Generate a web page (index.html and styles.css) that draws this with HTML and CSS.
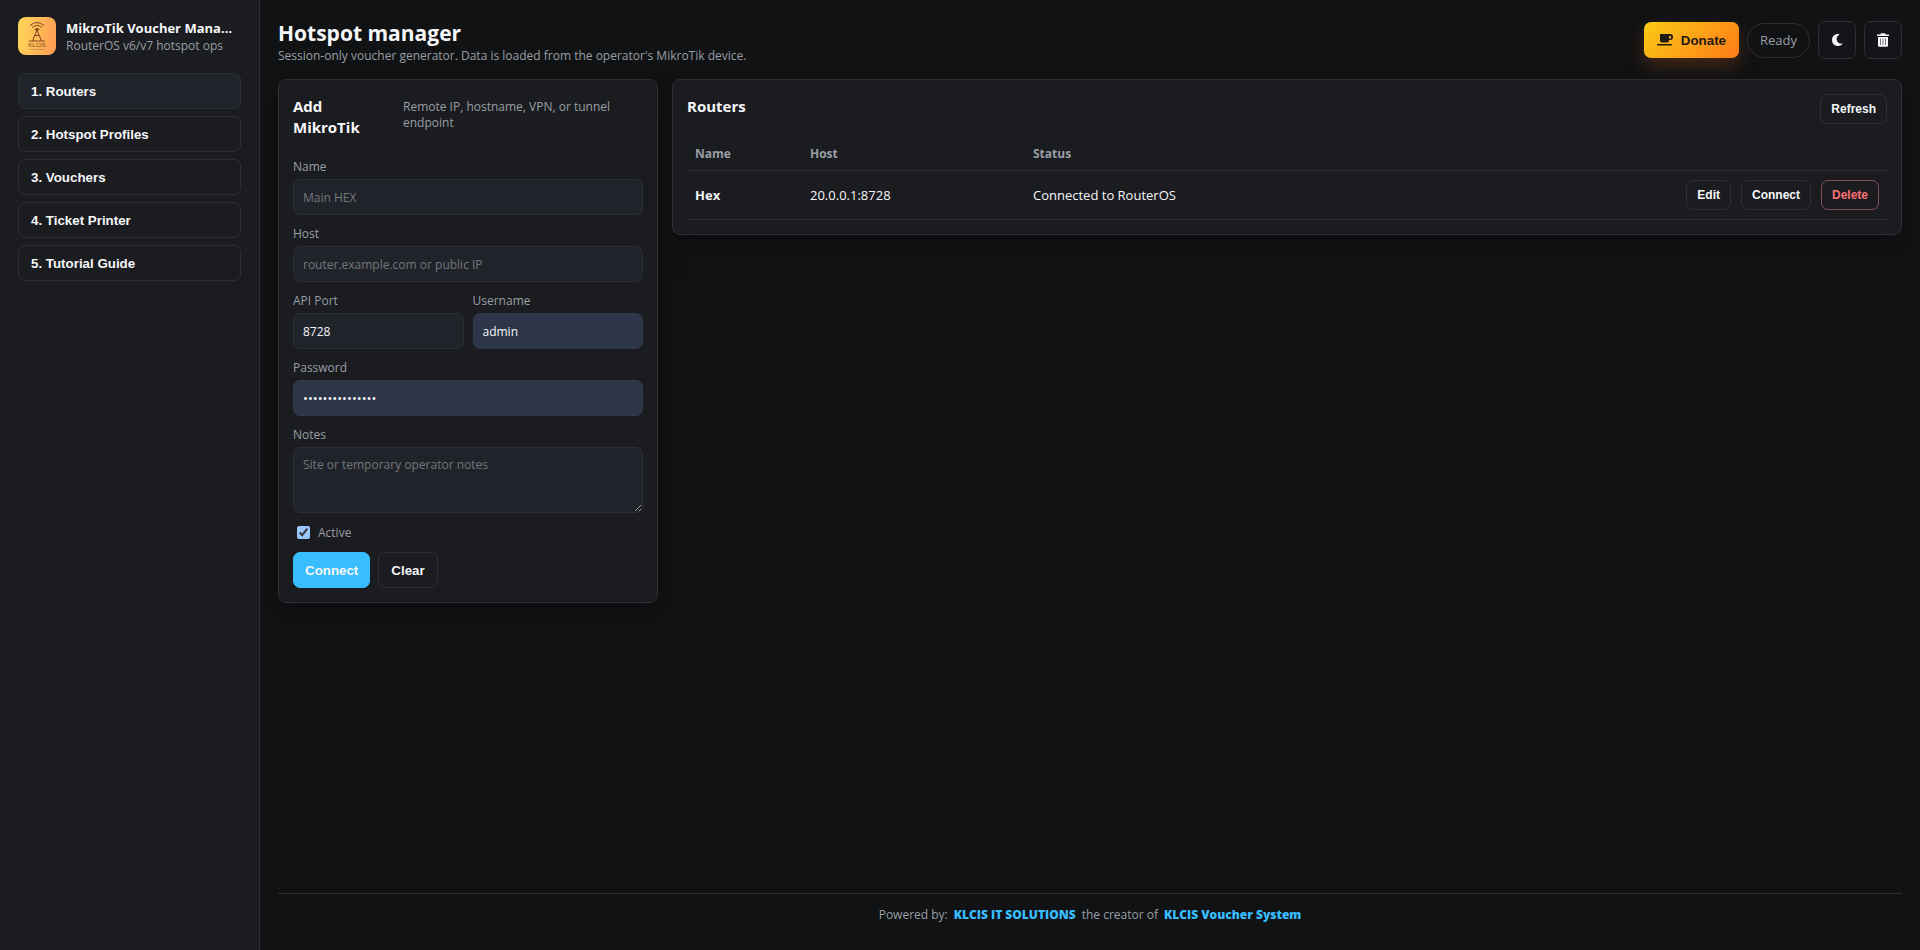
FILE: index.html
```html
<!DOCTYPE html>
<html lang="en">
<head>
  <meta charset="UTF-8">
  <meta name="viewport" content="width=device-width, initial-scale=1">
  <title>MikroTik Voucher Manager</title>
  <link rel="stylesheet" href="styles.css">
</head>
<body>
<div class="app">

  <aside class="sidebar">
    <div class="brand">
      <div class="brand-logo">
        <svg viewBox="0 0 38 38" fill="none" stroke="#7a4a1c" stroke-width="1">
          <path d="M12 8.500Q19 2.500 26 8.500M14 10.500Q19 6.500 24 10.500M16.500 12.500Q19 10.500 21.500 12.500"/>
          <path d="M19 13L14.500 24M19 13L23.500 24M17 18.500H21M11 24H27"/>
          <circle cx="19" cy="13" r="1" fill="#7a4a1c"/>
          <text class="logo-name" x="19" y="30" text-anchor="middle">KLCIS</text>
          <text class="logo-sub" x="19" y="33" text-anchor="middle">IT SOLUTIONS</text>
        </svg>
      </div>
      <div class="brand-text">
        <strong>MikroTik Voucher Manager</strong>
        <span>RouterOS v6/v7 hotspot ops</span>
      </div>
    </div>
    <nav class="nav">
      <button type="button" class="active">1. Routers</button>
      <button type="button">2. Hotspot Profiles</button>
      <button type="button">3. Vouchers</button>
      <button type="button">4. Ticket Printer</button>
      <button type="button">5. Tutorial Guide</button>
    </nav>
  </aside>

  <main class="main">
    <header class="topbar">
      <div>
        <h1>Hotspot manager</h1>
        <p>Session-only voucher generator. Data is loaded from the operator's MikroTik device.</p>
      </div>
      <div class="actions">
        <button type="button" class="donate">
          <svg width="16" height="14" viewBox="0 0 16 14" fill="currentColor">
            <path fill-rule="evenodd" d="M3 1H13a3 3 0 0 1 0 6H12v.5a2 2 0 0 1-2 2H5a2 2 0 0 1-2-2zM12 3V5.500H13a1.250 1.250 0 0 0 0-2.500z"/>
            <path d="M0 11H15c0 1-.7 1.500-1.500 1.500H1.500C.7 12.500 0 12 0 11z"/>
          </svg>
          Donate
        </button>
        <span class="status">Ready</span>
        <button type="button" class="icon-btn" aria-label="Toggle theme">
          <svg width="14" height="14" viewBox="0 0 14 14" fill="currentColor">
            <path d="M8 1C4.500 1 2 3.600 2 7s2.500 6 6 6c1.700 0 3.100-.6 4.200-1.700.3-.4 0-.8-.4-.7C8.800 11.100 6.600 8.900 6.600 6.100c0-1.800.9-3.300 2.400-4.200.4-.3.3-.8-.2-.9z"/>
          </svg>
        </button>
        <button type="button" class="icon-btn" aria-label="Clear session">
          <svg width="14" height="14" viewBox="0 0 14 14">
            <path fill="currentColor" d="M1 1.500H4.300L5 .3H9l.7 1.200H13V3H1zM2 4H12V12.500A1.300 1.300 0 0 1 10.700 13.800H3.300A1.300 1.300 0 0 1 2 12.500z"/>
            <path stroke="#55575c" stroke-width=".8" d="M4.500 5.500V12M7 5.500V12M9.500 5.500V12"/>
          </svg>
        </button>
      </div>
    </header>

    <div class="columns">
      <section class="panel">
        <div class="panel-head">
          <h2>Add MikroTik</h2>
          <span>Remote IP, hostname, VPN, or tunnel endpoint</span>
        </div>
        <form class="form">
          <label>Name
            <input type="text" name="name" placeholder="Main HEX">
          </label>
          <label>Host
            <input type="text" name="host" placeholder="router.example.com or public IP">
          </label>
          <div class="two">
            <label>API Port
              <input type="text" name="port" value="8728">
            </label>
            <label>Username
              <input type="text" name="username" class="filled" value="admin">
            </label>
          </div>
          <label>Password
            <input type="password" name="password" class="filled" value="voucherpassword">
          </label>
          <label>Notes
            <textarea name="notes" placeholder="Site or temporary operator notes"></textarea>
          </label>
          <label class="check">
            <input type="checkbox" name="active" checked>
            Active
          </label>
          <div class="form-actions">
            <button type="button" class="primary">Connect</button>
            <button type="button">Clear</button>
          </div>
        </form>
      </section>

      <section class="panel">
        <div class="panel-head">
          <h2>Routers</h2>
          <button type="button" class="small">Refresh</button>
        </div>
        <table>
          <thead>
            <tr>
              <th class="col-name">Name</th>
              <th class="col-host">Host</th>
              <th>Status</th>
              <th></th>
            </tr>
          </thead>
          <tbody>
            <tr>
              <td><strong>Hex</strong></td>
              <td>20.0.0.1:8728</td>
              <td>Connected to RouterOS</td>
              <td>
                <div class="row-actions">
                  <button type="button" class="small">Edit</button>
                  <button type="button" class="small">Connect</button>
                  <button type="button" class="small danger">Delete</button>
                </div>
              </td>
            </tr>
          </tbody>
        </table>
      </section>
    </div>

    <footer class="footer">
      <span>Powered by:</span>
      <a href="#">KLCIS IT SOLUTIONS</a>
      <span>the creator of</span>
      <a href="#">KLCIS Voucher System</a>
    </footer>
  </main>

</div>
</body>
</html>
```

FILE: styles.css
```css
:root {
  --bg: #111214;
  --panel: #1b1c20;
  --field: #20232a;
  --line: #2d3033;
  --text: #f5f7f9;
  --muted: #989fa5;
  --blue: #38bdff;
}

* { box-sizing: border-box; }

body {
  margin: 0;
  background: var(--bg);
  color: var(--text);
  font-family: "Segoe UI", "Open Sans", "Noto Sans", sans-serif;
  font-size: 13px;
}

h1, h2, p { margin: 0; }

button {
  height: 36px;
  padding: 0 12px;
  border: 1px solid var(--line);
  border-radius: 7px;
  background: var(--panel);
  color: var(--text);
  font-family: Arial, "Liberation Sans", sans-serif;
  font-weight: bold;
  cursor: pointer;
}

.app {
  display: grid;
  grid-template-columns: 260px minmax(0, 1fr);
  min-height: 100vh;
}

/* sidebar */
.sidebar {
  padding: 17px 18px;
  background: var(--panel);
  border-right: 1px solid var(--line);
}
.brand { display: flex; gap: 10px; margin-bottom: 18px; }
.brand-logo {
  flex: none;
  width: 38px;
  height: 38px;
  border-radius: 8px;
  background: linear-gradient(100deg, #ffd95a, #ff9a55);
}
.brand-logo svg { display: block; }
.brand-logo text { fill: #7a4a1c; stroke: none; font-family: Arial, "Liberation Sans", sans-serif; }
.logo-name { font-size: 6px; }
.logo-sub { font-size: 2px; }
.brand-text { min-width: 0; padding: 2px 4px 0 0; }
.brand-text strong, .brand-text span {
  display: block;
  line-height: 18px;
  overflow: hidden;
  white-space: nowrap;
  text-overflow: ellipsis;
}
.brand-text strong { font-size: 13px; }
.brand-text span { font-size: 12px; color: var(--muted); }
.nav { display: grid; gap: 7px; }
.nav button { text-align: left; }
.nav .active { background: var(--field); }

/* main area */
.main { display: flex; flex-direction: column; padding: 18px; }
.topbar { display: flex; justify-content: space-between; align-items: flex-start; margin-bottom: 16px; }
.topbar h1 { font-size: 21px; line-height: 30px; }
.topbar p { font-size: 12px; line-height: 15px; color: var(--muted); }
.actions { display: flex; align-items: center; gap: 8px; padding-top: 3px; }
.donate {
  display: flex;
  align-items: center;
  gap: 8px;
  padding: 0 13px;
  border: 0;
  background: linear-gradient(135deg, #facc15, #ff7a18);
  color: #1f1a10;
  box-shadow: 0 8px 18px rgba(249, 115, 22, 0.22);
}
.status {
  padding: 0 12px;
  border: 1px solid var(--line);
  border-radius: 18px;
  color: var(--muted);
  line-height: 33px;
}
.icon-btn {
  display: grid;
  place-items: center;
  width: 38px;
  height: 38px;
  padding: 0;
  background: #141518;
}

.columns {
  display: grid;
  grid-template-columns: 380px minmax(0, 1fr);
  align-items: start;
  gap: 14px;
}
.panel {
  padding: 14px;
  border: 1px solid var(--line);
  border-radius: 8px;
  background: var(--panel);
  box-shadow: 0 12px 28px rgba(0, 0, 0, 0.25);
}
.panel-head { display: flex; justify-content: space-between; align-items: flex-start; gap: 12px; margin-bottom: 12px; }
.panel-head h2 { padding-top: 2px; font-size: 15px; line-height: 21px; }
.panel-head span { width: 240px; flex: none; padding-top: 5px; color: var(--muted); font-size: 12px; line-height: 16px; }

/* form */
.form { display: grid; gap: 10px; padding-top: 8px; }
label { display: grid; gap: 3px; color: var(--muted); font-size: 12px; line-height: 18px; }
input, textarea {
  width: 100%;
  height: 36px;
  padding: 8px 9px;
  border: 1px solid var(--line);
  border-radius: 7px;
  background: var(--field);
  color: var(--text);
  font-family: inherit;
  font-size: 12px;
}
textarea { display: block; height: 66px; resize: vertical; }
input[type="password"] { font-size: 13px; }
input::placeholder, textarea::placeholder { color: #74777b; }
.filled { background: #2d3548; border-color: #303849; }
.two { display: grid; grid-template-columns: 1fr 1fr; gap: 9px; }
.check { display: flex; align-items: center; gap: 8px; padding-left: 4px; height: 19px; }
.check input { width: 13px; height: 13px; margin: 0; color-scheme: dark; }
.form-actions { display: flex; gap: 8px; }
.form-actions .primary { padding: 0 11px; background: var(--blue); border-color: var(--blue); }

/* routers table */
.small { height: 30px; padding: 0 10px; font-size: 12px; }
.danger { color: #f87171; border-color: #86505b; }
table { width: 100%; border-collapse: collapse; }
th, td { padding: 9px 8px; border-bottom: 1px solid var(--line); text-align: left; line-height: 18px; }
th { padding-bottom: 7px; color: var(--muted); font-size: 12px; }
.col-name { width: 115px; }
.col-host { width: 223px; }
.row-actions { display: flex; justify-content: flex-end; gap: 10px; }

.footer {
  display: flex;
  justify-content: center;
  gap: 6px;
  margin-top: auto;
  padding: 13px 0 9px;
  border-top: 1px solid var(--line);
  color: var(--muted);
  font-size: 12px;
  line-height: 16px;
}
.footer a { color: var(--blue); font-weight: 800; text-decoration: none; }
```
